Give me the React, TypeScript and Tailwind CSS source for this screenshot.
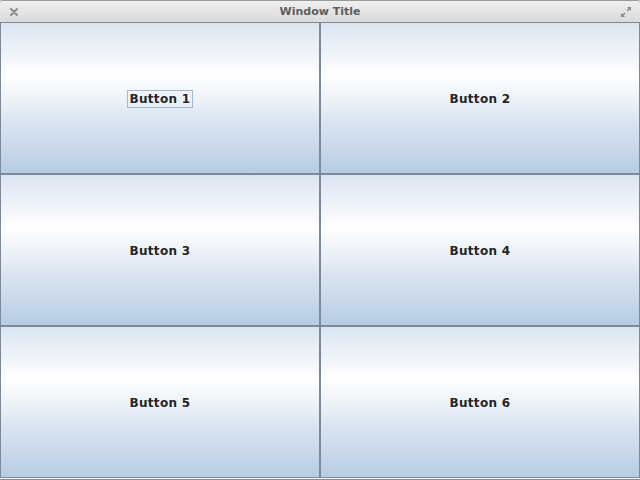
import React from 'react';

const labels = ['Button 1', 'Button 2', 'Button 3', 'Button 4', 'Button 5', 'Button 6'];

function CloseIcon() {
  return (
    <svg width="10" height="10" viewBox="0 0 10 10">
      <path d="M2 2 L8 8 M8 2 L2 8" stroke="#8a8a8a" strokeWidth="2" strokeLinecap="round" />
    </svg>
  );
}

function MaximizeIcon() {
  return (
    <svg width="12" height="12" viewBox="0 0 12 12">
      <path d="M7 1 H11 V5 Z" fill="#8a8a8a" />
      <path d="M1 7 V11 H5 Z" fill="#8a8a8a" />
      <path d="M10 2 L7 5 M2 10 L5 7" stroke="#8a8a8a" strokeWidth="1.5" />
    </svg>
  );
}

function GridButton({ label, focused }: { label: string; focused?: boolean }) {
  return (
    <button className="flex items-center justify-center border border-[#7b8a9a] pt-[2px] bg-[linear-gradient(to_bottom,#dae5f1_0%,#ffffff_35%,#d6e2ef_70%,#b7cde3_100%)]">
      <span
        className={`px-[2px] py-[1px] text-[12px] font-bold leading-[14px] tracking-[0.3px] text-[#252525] ${
          focused ? 'border border-[#a3b9cf]' : 'border border-transparent'
        }`}
      >
        {label}
      </span>
    </button>
  );
}

export default function App() {
  return (
    <div
      className="flex h-[480px] w-[640px] flex-col bg-[#d8d8d8]"
      style={{ fontFamily: '"DejaVu Sans", sans-serif' }}
    >
      <div className="relative flex h-[22px] items-center justify-center rounded-t-[3px] border-t border-[#9a9a9a] pt-[1px] bg-[linear-gradient(to_bottom,#f0f0f0,#d9d9d9)]">
        <span className="absolute left-[9px] top-[6px]">
          <CloseIcon />
        </span>
        <span className="text-[11px] font-bold text-[#5e5e5e]">Window Title</span>
        <span className="absolute right-[8px] top-[5px]">
          <MaximizeIcon />
        </span>
      </div>
      <div className="grid h-[456px] grid-cols-2 grid-rows-3">
        {labels.map((l, i) => (
          <GridButton key={l} label={l} focused={i === 0} />
        ))}
      </div>
      <div className="h-[1px] bg-[#f4f4f4]" />
      <div className="h-[1px] bg-[#8c8c8c]" />
    </div>
  );
}
